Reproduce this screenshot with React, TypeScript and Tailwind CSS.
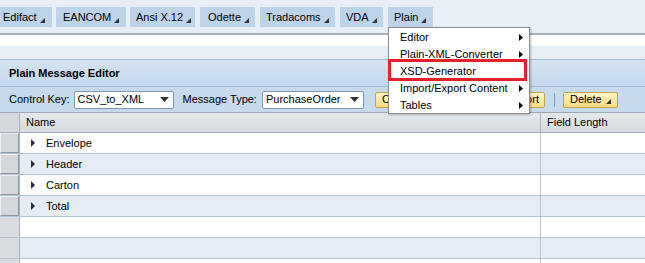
import React from "react";

const tabs = [
  { label: "Edifact", cls: "w-[52px] pl-[3px]" },
  { label: "EANCOM", cls: "w-[70px] ml-[4px] pl-[7px]" },
  { label: "Ansi X.12", cls: "w-[65px] ml-[4px] pl-[6px]" },
  { label: "Odette", cls: "w-[55px] ml-[5px] pl-[8px]" },
  { label: "Tradacoms", cls: "w-[75px] ml-[5px] pl-[6px]" },
  { label: "VDA", cls: "w-[43px] ml-[5px] pl-[6px]" },
  { label: "Plain", cls: "w-[45px] ml-[5px] pl-[6px]" },
];

const menuItems = [
  { label: "Editor", sub: true },
  { label: "Plain-XML-Converter", sub: true },
  { label: "XSD-Generator", sub: false },
  { label: "Import/Export Content", sub: true },
  { label: "Tables", sub: true },
];

const rows = ["Envelope", "Header", "Carton", "Total", "", "", ""];

function Corner() {
  return (
    <svg width="5" height="5" viewBox="0 0 5 5" className="ml-[3px] self-end mb-[4px] shrink-0">
      <polygon points="5,0 5,5 0,5" fill="#333" />
    </svg>
  );
}

function RightArrow() {
  return (
    <svg width="4" height="7" viewBox="0 0 4 7">
      <polygon points="0,0 4,3.5 0,7" fill="#000" />
    </svg>
  );
}

function Select(props: { value: string; width: string }) {
  return (
    <div
      className={`${props.width} h-[18px] bg-white border border-[#7d98b5] rounded-[2px] flex items-center justify-between pl-[3px] pr-[4px]`}
    >
      <span>{props.value}</span>
      <svg width="9" height="5" viewBox="0 0 9 5">
        <polygon points="0,0 9,0 4.5,5" fill="#333" />
      </svg>
    </div>
  );
}

function YellowButton(props: { label: string; width: string; menu?: boolean; right?: boolean }) {
  return (
    <div
      className={`${props.width} h-[16px] flex items-center ${props.right ? "justify-end pr-[5px]" : "pl-[6px]"} bg-gradient-to-b from-[#fff4c8] to-[#f9dc7c] border border-[#c2a24d] rounded-[2px] overflow-hidden`}
    >
      <span className="whitespace-nowrap">{props.label}</span>
      {props.menu ? (
        <svg width="5" height="5" viewBox="0 0 5 5" className="ml-[4px] mt-[4px]">
          <polygon points="5,0 5,5 0,5" fill="#333" />
        </svg>
      ) : null}
    </div>
  );
}

export default function App() {
  return (
    <div className="relative w-[645px] h-[263px] overflow-hidden bg-white font-['Liberation_Sans',Arial,sans-serif] text-[11px] text-black leading-none">
      {/* top tab strip */}
      <div className="h-[33px] bg-[#e8eef6] pt-[7px] flex items-start">
        {tabs.map((t) => (
          <div key={t.label} className={`${t.cls} h-[20px] bg-[#bdd3ea] flex items-center shrink-0`}>
            <span className="whitespace-nowrap">{t.label}</span>
            <Corner />
          </div>
        ))}
      </div>
      <div className="h-[2px] bg-[#a7b1bc]" />
      <div className="h-[11px] bg-white" />
      <div className="h-[14px] bg-[#e8eef6] border-b border-[#a3b7cc]" />

      {/* panel title */}
      <div className="h-[27px] bg-gradient-to-b from-[#d5e4f2] to-[#c4d7eb] border-b border-[#a6bcd2] flex items-center pl-[9px]">
        <span className="font-bold">Plain Message Editor</span>
      </div>

      {/* toolbar */}
      <div className="h-[25px] bg-[#c7d9ec] flex items-center pl-[9px]">
        <span>Control Key:</span>
        <div className="ml-[4px]">
          <Select value="CSV_to_XML" width="w-[100px]" />
        </div>
        <span className="ml-[9px]">Message Type:</span>
        <div className="ml-[5px]">
          <Select value="PurchaseOrder" width="w-[102px]" />
        </div>
        <div className="ml-[11px] flex items-center gap-[4px]">
          <YellowButton label="Create" width="w-[48px]" />
          <YellowButton label="" width="w-[56px]" />
          <YellowButton label="Export" width="w-[58px]" right />
        </div>
        <div className="ml-[9px] w-[1px] h-[14px] bg-[#8a9bad]" />
        <div className="ml-[8px]">
          <YellowButton label="Delete" width="w-[55px]" menu />
        </div>
      </div>

      {/* table */}
      <div className="flex h-[21px] border-y border-[#9ea9b5] bg-gradient-to-b from-[#e6e9ec] to-[#d6dade]">
        <div className="w-[20px] border-r border-[#aab4bf] bg-[#d5d9de]" />
        <div className="w-[521px] border-r border-[#aab4bf] flex items-center pl-[6px]">Name</div>
        <div className="flex-1 flex items-center pl-[6px] whitespace-nowrap">Field Length</div>
      </div>
      {rows.map((r, i) => (
        <div
          key={i}
          className={`flex h-[21px] border-b border-[#b6c3d0] ${i % 2 === 0 ? "bg-white" : "bg-[#e6ecf5]"}`}
        >
          <div className="w-[20px] border-r border-[#aab4bf] bg-[#d8dce0] flex">
            {r ? (
              <div className="w-[19px] h-[20px] bg-[#d4d8dd] border-t border-l border-[#eef0f2] border-r-[#8e969e] border-b-[#8e969e] border-r border-b" />
            ) : null}
          </div>
          <div className="w-[521px] border-r border-[#b6c3d0] flex items-center pl-[11px]">
            {r ? (
              <>
                <svg width="4" height="8" viewBox="0 0 4 8">
                  <polygon points="0,0 4,4 0,8" fill="#2a2a38" />
                </svg>
                <span className="ml-[11px]">{r}</span>
              </>
            ) : null}
          </div>
          <div className="flex-1" />
        </div>
      ))}

      {/* dropdown menu */}
      <div className="absolute left-[388px] top-[27px] w-[142px] h-[87px] bg-white border border-[#8f8f8f] shadow-[1px_1px_2px_rgba(0,0,0,0.25)] pt-[1px]">
        {menuItems.map((m) => (
          <div key={m.label} className="h-[17px] flex items-center justify-between pl-[11px] pr-[6px]">
            <span className="whitespace-nowrap">{m.label}</span>
            {m.sub ? <RightArrow /> : null}
          </div>
        ))}
      </div>
      {/* highlight box */}
      <div className="absolute left-[388px] top-[59px] w-[139px] h-[22px] border-[3px] border-[#e5202a]" />
    </div>
  );
}
